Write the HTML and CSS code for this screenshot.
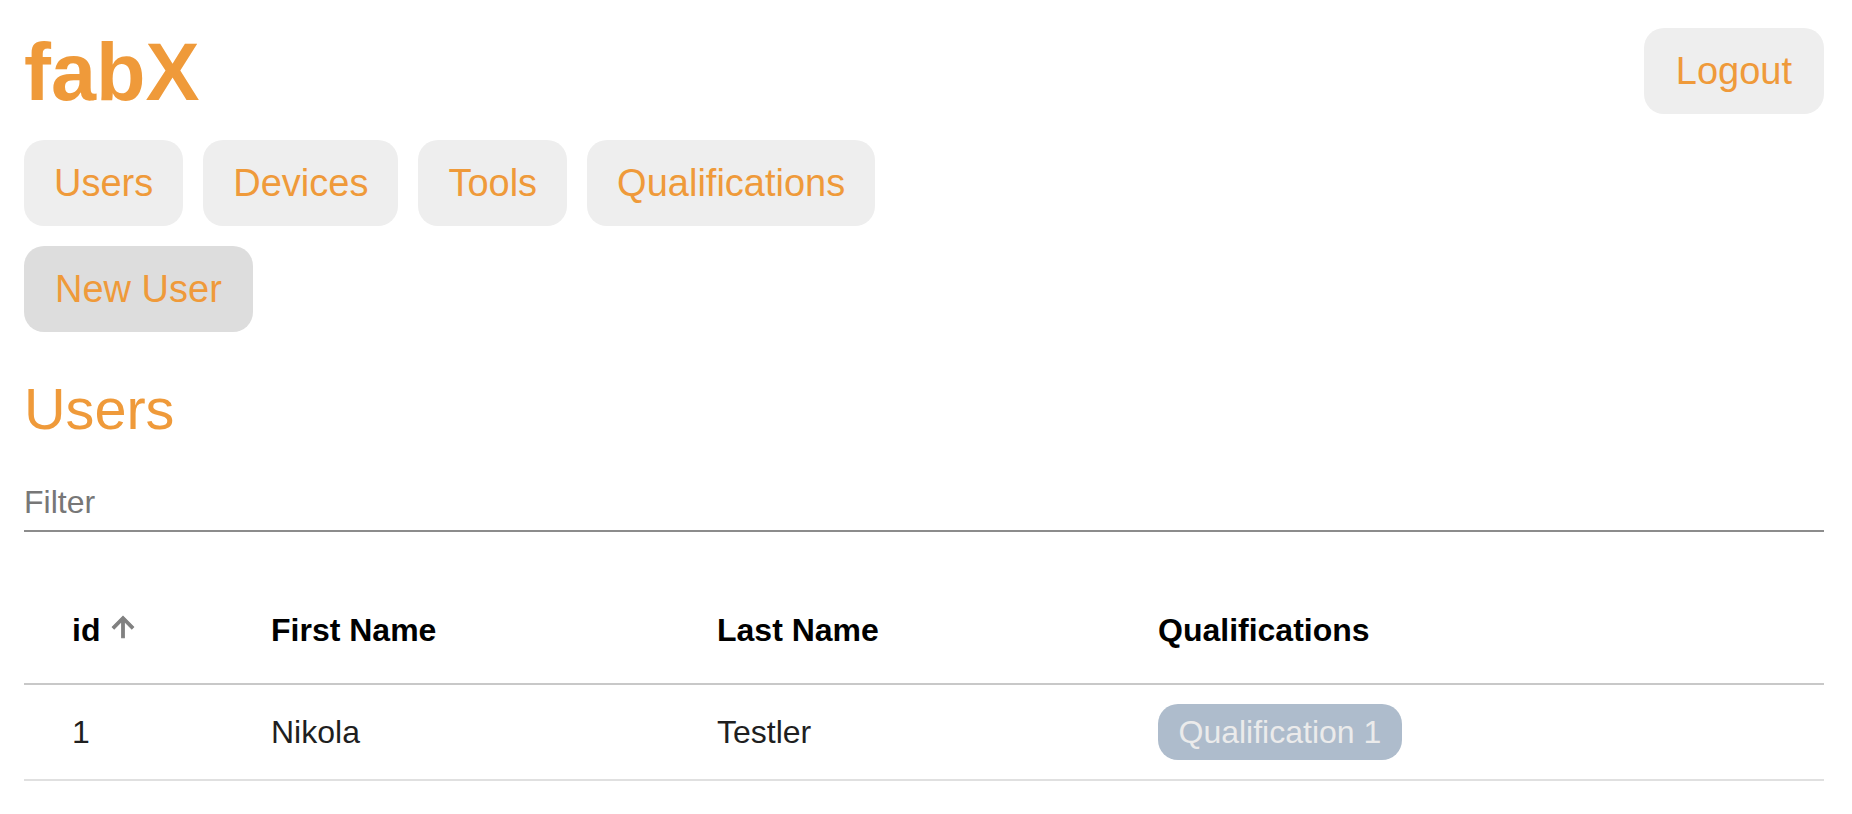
FILE: index.html
```html
<!DOCTYPE html>
<html lang="en">
<head>
<meta charset="utf-8">
<title>fabX</title>
<link rel="stylesheet" href="styles.css">
</head>
<body>
<header class="top">
  <h1 class="logo">fabX</h1>
  <a class="btn btn-logout">Logout</a>
</header>
<nav class="bar nav">
  <a class="btn">Users</a>
  <a class="btn">Devices</a>
  <a class="btn">Tools</a>
  <a class="btn">Qualifications</a>
</nav>
<div class="bar actions">
  <a class="btn btn-dark">New User</a>
</div>
<h2 class="title">Users</h2>
<div class="filter"><input class="filter-input" type="text" placeholder="Filter"></div>
<table class="table">
  <colgroup>
    <col class="c1"><col class="c2"><col class="c3"><col class="c4">
  </colgroup>
  <thead>
    <tr>
      <th><span class="sort">id<svg class="arrow" viewBox="0 0 24 24"><path d="M4 12l1.41 1.41L11 7.83V20h2V7.83l5.58 5.59L20 12l-8-8-8 8z"/></svg></span></th>
      <th>First Name</th>
      <th>Last Name</th>
      <th>Qualifications</th>
    </tr>
  </thead>
  <tbody>
    <tr>
      <td>1</td>
      <td>Nikola</td>
      <td>Testler</td>
      <td><span class="chip">Qualification 1</span></td>
    </tr>
  </tbody>
</table>
</body>
</html>
```

FILE: styles.css
```css
* { box-sizing: border-box; }
html, body { margin: 0; background: #fff; }
body {
  padding: 28px 28px 0 24px;
  font-family: "Liberation Sans", Arial, sans-serif;
  font-size: 32px;
  color: #1f1f1f;
}
.top {
  display: flex;
  justify-content: space-between;
  align-items: center;
  height: 86px;
}
.logo {
  margin: 0;
  padding-top: 2px;
  font-size: 81px;
  line-height: 88px;
  font-weight: 700;
  color: #ef9a3a;
}
.btn {
  display: block;
  height: 86px;
  padding: 0 30px;
  border-radius: 20px;
  background: #eee;
  color: #ef9a3a;
  font-size: 38px;
  line-height: 86px;
}
.btn-logout { padding: 0 32px; }
.btn-dark { background: #ddd; padding: 0 31px; }
.bar { display: flex; gap: 20px; }
.nav { margin-top: 26px; }
.actions { margin-top: 20px; }
.title {
  margin: 0;
  padding-top: 44px;
  font-size: 57.6px;
  line-height: 66px;
  font-weight: 400;
  color: #ef9a3a;
}
.filter {
  margin-top: 38px;
  border-bottom: 2px solid #8c8c8c;
}
.filter-input {
  display: block;
  width: 100%;
  height: 50px;
  padding: 0 0 6px;
  border: 0;
  outline: 0;
  background: transparent;
  font: inherit;
  font-size: 32px;
}
.filter-input::placeholder { color: #777; opacity: 1; }
.table {
  width: 100%;
  margin-top: 48px;
  border-collapse: collapse;
  table-layout: fixed;
}
.c1 { width: 199px; }
.c2 { width: 446px; }
.c3 { width: 441px; }
th, td {
  padding: 0 0 0 48px;
  text-align: left;
  vertical-align: middle;
}
th {
  height: 104px;
  padding-bottom: 3px;
  font-weight: 700;
  font-size: 32px;
  color: #000;
  border-bottom: 2px solid #c8c8c8;
}
td {
  height: 96px;
  font-weight: 400;
  font-size: 32px;
  border-bottom: 2px solid #e0e0e0;
}
.sort { display: inline-flex; align-items: center; }
.arrow {
  width: 32px;
  height: 32px;
  margin: -6px 0 0 7px;
  fill: #808080;
  stroke: #808080;
  stroke-width: 0.8;
}
.chip {
  display: inline-block;
  height: 56px;
  padding: 0 20.5px;
  border-radius: 20px;
  background: #aebccc;
  color: #ebebeb;
  line-height: 56px;
  font-size: 32px;
}
```
